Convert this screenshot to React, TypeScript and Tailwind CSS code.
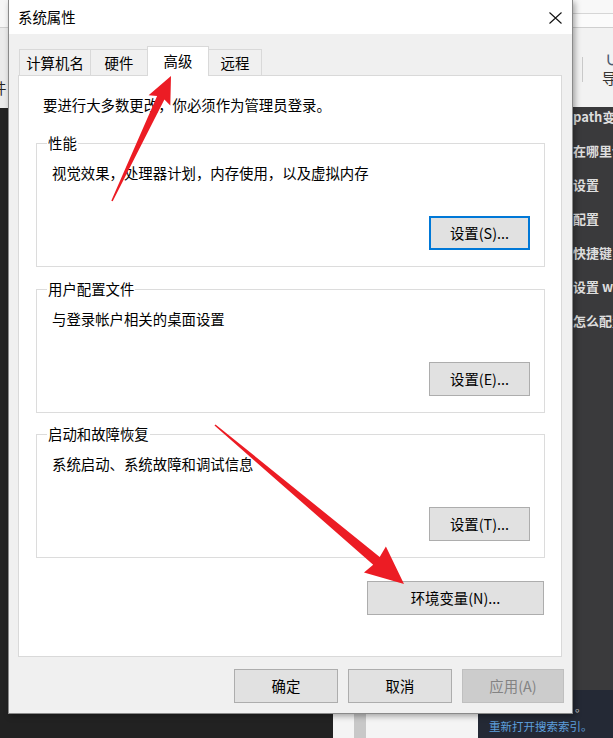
import type { ReactNode } from "react";

interface WinButtonProps {
  label: string;
  className?: string;
  focused?: boolean;
  disabled?: boolean;
}

function WinButton({ label, className = "", focused, disabled }: WinButtonProps) {
  const tone = focused
    ? "border-2 border-[#0078d7] bg-[#e1e1e1] text-black"
    : disabled
      ? "border border-[#bfbfbf] bg-[#cccccc] text-[#838383]"
      : "border border-[#adadad] bg-[#e1e1e1] text-black";
  return (
    <button
      type="button"
      className={`flex h-[34px] items-center justify-center text-[14.4px] leading-[20px] ${tone} ${className}`}
    >
      {label}
    </button>
  );
}

interface GroupBoxProps {
  title: string;
  text: string;
  button: ReactNode;
  className?: string;
}

function GroupBox({ title, text, button, className = "" }: GroupBoxProps) {
  return (
    <div className={`relative flex h-[124px] flex-col border border-[#dcdcdc] ${className}`}>
      <span className="absolute -top-[11px] left-[10px] bg-white px-px leading-[20px]">{title}</span>
      <p className="pl-[15px] pt-[19px] leading-[20px]">{text}</p>
      <div className="mb-[16px] mr-[14px] mt-auto self-end">{button}</div>
    </div>
  );
}

const tabs = [
  { name: "计算机名", width: "w-[72px]" },
  { name: "硬件", width: "w-[58px]" },
  { name: "高级", width: "w-[62px]", active: true },
  { name: "远程", width: "w-[54px]" },
];

const sideItems = ["path变量", "在哪里设置", "设置", "配置", "快捷键", "设置 windows", "怎么配置"];

// hand-drawn style marker arrow: tapered shaft with swept-back head
function arrowPoints(
  tail: [number, number],
  tip: [number, number],
  headLen: number,
  headHalf: number,
  shaftHalf: number,
  sweep: number,
) {
  const dx = tip[0] - tail[0];
  const dy = tip[1] - tail[1];
  const len = Math.hypot(dx, dy);
  const ux = dx / len;
  const uy = dy / len;
  const px = -uy;
  const py = ux;
  const bx = tip[0] - ux * headLen;
  const by = tip[1] - uy * headLen;
  const wx = bx - ux * sweep;
  const wy = by - uy * sweep;
  const pts: [number, number][] = [
    [tail[0] + px * 0.8, tail[1] + py * 0.8],
    [bx + px * shaftHalf, by + py * shaftHalf],
    [wx + px * headHalf, wy + py * headHalf],
    tip,
    [wx - px * headHalf, wy - py * headHalf],
    [bx - px * shaftHalf, by - py * shaftHalf],
    [tail[0] - px * 0.8, tail[1] - py * 0.8],
  ];
  return pts.map((p) => `${p[0].toFixed(1)},${p[1].toFixed(1)}`).join(" ");
}

export default function App() {
  return (
    <div className="relative h-[738px] w-[613px] overflow-hidden bg-[#222222] font-['Noto_Sans_CJK_SC',sans-serif] text-[14.4px] text-black">
      {/* windows behind the dialog */}
      <div className="absolute left-0 top-0 flex h-[108px] w-[12px] flex-col bg-[#ebebeb]">
        <div className="h-[28px] border-b border-[#cfcfcf] bg-[#f6f6f6]" />
        <span className="ml-[-8px] mt-[50px] leading-[20px] text-[#222]">件</span>
      </div>

      <div className="absolute left-[560px] top-0 flex h-[107px] w-[53px] flex-col bg-[#f2f2f2]">
        <div className="h-[14px] border-b border-[#d6d6d6] bg-[#f8f8f8]" />
        <div className="h-[14px] border-b border-[#cfcfcf] bg-[#fbfbfb]" />
        <div className="relative flex-1">
          <div className="absolute left-[22px] top-[29px] h-[25px] w-px bg-[#c9c9c9]" />
          <span className="absolute left-[45px] top-[24px] text-[14px] font-bold leading-[14px] text-[#4b5b70]">∪</span>
          <span className="absolute left-[42px] top-[40px] leading-[20px] text-[#333]">导</span>
        </div>
      </div>

      <div className="absolute left-[560px] top-[107px] flex h-[583px] w-[53px] flex-col gap-[14px] whitespace-nowrap bg-[#3a3a3c] pl-[13px] pt-[-2px] text-[13px] font-bold leading-[20px] text-[#dedede]">
        {sideItems.map((item) => (
          <span key={item}>{item}</span>
        ))}
      </div>

      <div className="absolute left-[333px] top-[700px] h-[38px] w-[145px] bg-[#f4f4f4]">
        <div className="ml-[21px] h-full w-[12px] bg-[#c8c8c8]" />
      </div>

      <div className="absolute left-[478px] top-[690px] flex h-[48px] w-[135px] flex-col bg-[#242935] pl-[11px] text-[11.5px] leading-[18px]">
        <span className="ml-[86px] mt-[8px] text-[#d0d0d0]">。</span>
        <span className="mt-[1px] whitespace-nowrap text-[#5d9fdc]">重新打开搜索索引。</span>
      </div>

      {/* system properties dialog */}
      <div className="absolute left-[8px] top-0 flex h-[714px] w-[565px] flex-col border-x border-b border-[#8a8a8a] bg-[#f0f0f0] shadow-[2px_2px_6px_rgba(0,0,0,0.35)]">
        <div className="flex h-[34px] items-center justify-between bg-white pl-[9px] pr-[10px]">
          <span className="leading-[20px]">系统属性</span>
          <svg width="13" height="12" viewBox="0 0 13 12" className="mt-[2px]">
            <path d="M0.5 0.5 L12.5 11.5 M12.5 0.5 L0.5 11.5" stroke="#111" strokeWidth="1.1" fill="none" />
          </svg>
        </div>

        <div className="ml-[10px] mt-[12px] flex h-[30px] items-end">
          {tabs.map((tab, i) =>
            tab.active ? (
              <div
                key={tab.name}
                className={`relative z-10 -ml-px flex h-[30px] items-center justify-center border-x border-t border-[#d9d9d9] bg-white pb-[2px] leading-[20px] ${tab.width}`}
              >
                {tab.name}
              </div>
            ) : (
              <div
                key={tab.name}
                className={`flex h-[27px] items-center justify-center border border-[#d9d9d9] bg-[#f0f0f0] leading-[20px] ${i > 0 ? "-ml-px" : ""} ${tab.width}`}
              >
                {tab.name}
              </div>
            ),
          )}
        </div>

        <div className="-mt-px ml-[9px] flex h-[582px] w-[544px] flex-col border border-[#d9d9d9] bg-white pl-[17px] pr-[16px] pt-[19px]">
          <p className="pl-[7px] leading-[20px]">要进行大多数更改，你必须作为管理员登录。</p>
          <GroupBox
            className="mt-[28px]"
            title="性能"
            text="视觉效果，处理器计划，内存使用，以及虚拟内存"
            button={<WinButton label="设置(S)..." focused className="w-[101px]" />}
          />
          <GroupBox
            className="mt-[22px]"
            title="用户配置文件"
            text="与登录帐户相关的桌面设置"
            button={<WinButton label="设置(E)..." className="w-[101px]" />}
          />
          <GroupBox
            className="mt-[21px]"
            title="启动和故障恢复"
            text="系统启动、系统故障和调试信息"
            button={<WinButton label="设置(T)..." className="w-[101px]" />}
          />
          <WinButton label="环境变量(N)..." className="mr-px mt-[23px] h-[33px] w-[177px] self-end" />
        </div>

        <div className="mr-[8px] mt-[12px] flex justify-end gap-[10px]">
          <WinButton label="确定" className="w-[104px]" />
          <WinButton label="取消" className="w-[104px]" />
          <WinButton label="应用(A)" disabled className="w-[102px]" />
        </div>
      </div>

      {/* red annotation arrows */}
      <svg className="pointer-events-none absolute inset-0" width="613" height="738" viewBox="0 0 613 738">
        <polygon points={arrowPoints([112, 201], [171, 76], 24, 12, 4, 3)} fill="#ec1c24" />
        <polygon points={arrowPoints([215, 425], [404, 584], 36, 17, 5, 2)} fill="#ec1c24" />
      </svg>
    </div>
  );
}
